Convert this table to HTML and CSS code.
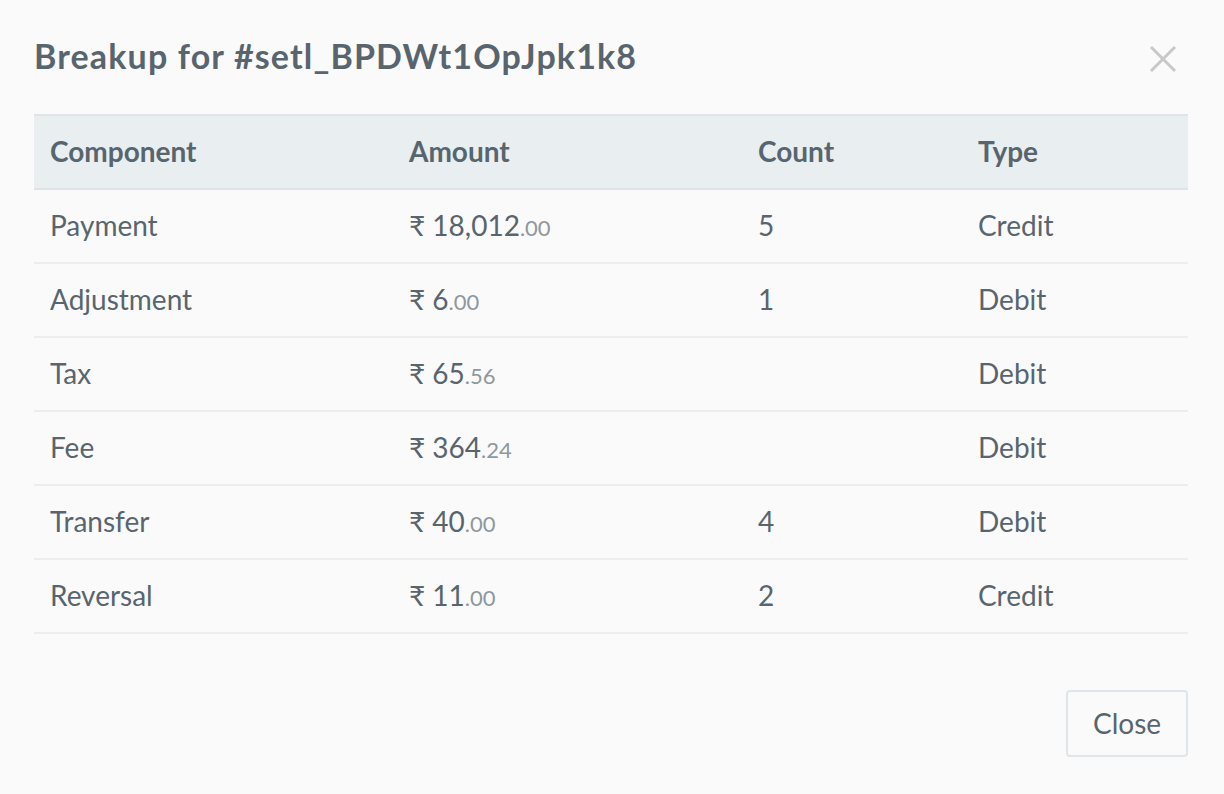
FILE: index.html
```html
<!DOCTYPE html>
<html>
<head>
<meta charset="utf-8">
<link rel="stylesheet" href="styles.css">
</head>
<body>
<div class="modal">
  <div class="modal-header">
    <h1 class="title">Breakup for #setl_BPDWt1OpJpk1k8</h1>
    <button class="close-x" aria-label="Close">
      <svg width="28" height="28" viewBox="0 0 28 28"><path d="M2 2 L26 26 M26 2 L2 26" stroke="#c8c8c8" stroke-width="3" fill="none"/></svg>
    </button>
  </div>
  <table class="breakup">
    <thead>
      <tr><th class="c1">Component</th><th class="c2">Amount</th><th class="c3">Count</th><th class="c4">Type</th></tr>
    </thead>
    <tbody>
      <tr><td>Payment</td><td>₹ 18,012<span class="dec">.00</span></td><td>5</td><td>Credit</td></tr>
      <tr><td>Adjustment</td><td>₹ 6<span class="dec">.00</span></td><td>1</td><td>Debit</td></tr>
      <tr><td>Tax</td><td>₹ 65<span class="dec">.56</span></td><td></td><td>Debit</td></tr>
      <tr><td>Fee</td><td>₹ 364<span class="dec">.24</span></td><td></td><td>Debit</td></tr>
      <tr><td>Transfer</td><td>₹ 40<span class="dec">.00</span></td><td>4</td><td>Debit</td></tr>
      <tr><td>Reversal</td><td>₹ 11<span class="dec">.00</span></td><td>2</td><td>Credit</td></tr>
    </tbody>
  </table>
  <div class="modal-footer">
    <button class="btn">Close</button>
  </div>
</div>
</body>
</html>
```

FILE: styles.css
```css
html, body {
  margin: 0;
  padding: 0;
  background: #fafafa;
}
body {
  font-family: Lato, "Open Sans", sans-serif;
  color: #58656e;
}
.modal {
  width: 1224px;
  height: 794px;
  box-sizing: border-box;
  padding: 0 36px 0 34px;
  background: #fafafa;
}
.modal-header {
  display: flex;
  align-items: center;
  justify-content: space-between;
  height: 114px;
}
.title {
  margin: 0;
  font-size: 34px;
  letter-spacing: 1.15px;
  font-weight: 700;
  color: #58656e;
  padding-bottom: 3px;
}
.close-x {
  border: 0;
  background: none;
  padding: 0;
  margin-right: 11px;
  margin-top: 4px;
  width: 28px;
  height: 28px;
  display: flex;
  cursor: pointer;
}
.breakup {
  width: 100%;
  border-collapse: collapse;
  table-layout: fixed;
}
.breakup th, .breakup td {
  text-align: left;
  padding: 0 16px 3px;
  font-size: 28px;
  height: 74px;
  box-sizing: border-box;
}
.breakup thead tr {
  background: #e9eff0;
  border-top: 2px solid #e0e4e6;
  border-bottom: 2px solid #dfe3e5;
}
.breakup th {
  font-weight: 700;
}
.breakup tbody tr {
  border-bottom: 2px solid #eaeeef;
}
.c1 { width: 359px; }
.c2 { width: 349px; }
.c3 { width: 220px; }
.dec {
  font-size: 22px;
  color: #8e989e;
}
.modal-footer {
  display: flex;
  justify-content: flex-end;
  padding-top: 56px;
}
.btn {
  font-family: Lato, "Open Sans", sans-serif;
  font-size: 28px;
  color: #58656e;
  background: #fafafa;
  border: 2px solid #dfe5e8;
  border-radius: 4px;
  width: 122px;
  height: 67px;
  padding: 0 0 2px;
}
```
